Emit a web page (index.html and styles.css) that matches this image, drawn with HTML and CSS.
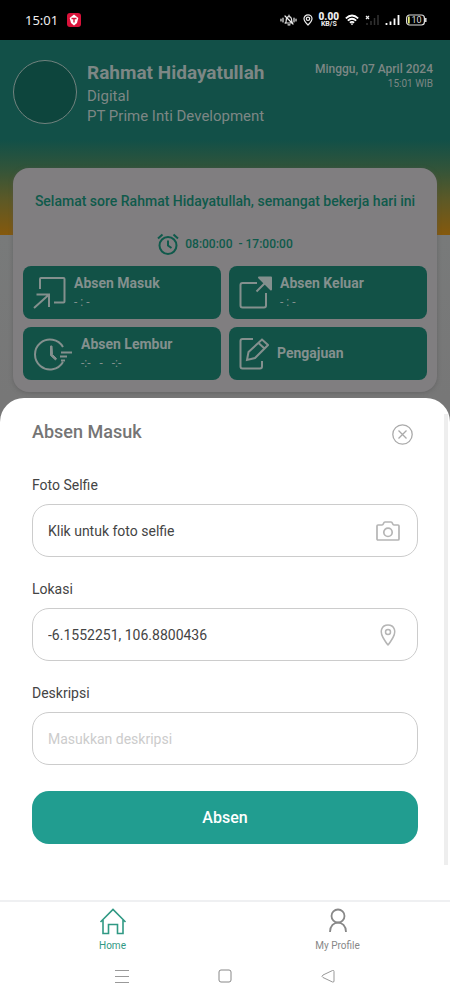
FILE: index.html
```html
<!DOCTYPE html>
<html lang="id">
<head>
<meta charset="utf-8">
<meta name="viewport" content="width=device-width, initial-scale=1">
<title>Absen Masuk</title>
<link rel="stylesheet" href="styles.css">
</head>
<body>
<div class="app">
  <div class="status">
    <span class="status-time">15:01</span>
    <svg class="status-app" width="14" height="14" viewBox="0 0 14 14"><rect width="14" height="14" rx="3" fill="#d9123a"/><path d="M7 1.500 11.300 5 10 10 7 12.500 4 10 2.700 5Z" fill="#fff"/><path d="M4.500 5.500h5M7 5.500v4" stroke="#d9123a" stroke-width="1.400" fill="none"/></svg>
    <div class="status-icons">
      <svg width="17" height="12" viewBox="0 0 17 12" fill="none" stroke="#eee" stroke-width="1.200" stroke-linecap="round"><path d="M1 5v2M3 4v4M16 5v2M14 4v4M5 9h7M5.500 9C6.500 8 6 6 6.500 4.500 7.500 2 11 2 11.500 5c.2 2 .2 3 1 4M5 2l8 8M8 10.800h2M9 2V1"/></svg>
      <svg width="10" height="12" viewBox="0 0 10 12" fill="none" stroke="#eee" stroke-width="1.200"><path d="M5 11C3 9 1 7 1 4.800a4 4 0 0 1 8 0C9 7 7 9 5 11Z"/><circle cx="5" cy="4.800" r="1.700"/></svg>
      <span class="speed"><b>0.00</b><span>KB/S</span></span>
      <svg width="14" height="12" viewBox="0 0 14 12" fill="none" stroke="#fff" stroke-width="1.700"><path d="M.8 4.300Q7-1.300 13.200 4.300M2.800 6.600Q7 2.900 11.200 6.600M4.800 8.700Q7 6.900 9.200 8.700"/><path d="M5.500 9.500h3L7 11.300Z" fill="#fff" stroke="none"/></svg>
      <svg width="14" height="12" viewBox="0 0 14 12" fill="none"><path d="m1 2 3 3M4 2 1 5" stroke="#eee" stroke-width="1.200"/><path d="M2 11V9M6 11V7M9.500 11V4M13 11V1" stroke="#333" stroke-width="1.500"/></svg>
      <svg width="15" height="12" viewBox="0 0 15 12" stroke="#fff" stroke-width="1.800"><path d="M1.500 11V9M5.500 11V7.500M9.500 11V4.500M13.500 11V1"/></svg>
      <svg class="battery" width="21" height="12" viewBox="0 0 21 12"><rect x=".6" y="1" width="17.800" height="10" rx="3" fill="none" stroke="#ddd" stroke-width="1.200"/><path d="M2 2.500h1.700v7H2Z" fill="#e8ee7a"/><path d="M19.800 4v4" stroke="#ddd" stroke-width="1.500"/><text x="10.500" y="9.300" text-anchor="middle">10</text></svg>
    </div>
  </div>

  <main class="home">
    <header class="profile">
      <div class="avatar"></div>
      <div class="who">
        <h1>Rahmat Hidayatullah</h1>
        <p>Digital</p>
        <p>PT Prime Inti Development</p>
      </div>
      <div class="when"><strong>Minggu, 07 April 2024</strong><span>15:01 WIB</span></div>
    </header>
    <section class="card">
      <p class="greeting">Selamat sore Rahmat Hidayatullah, semangat bekerja hari ini</p>
      <div class="hours">
        <svg width="22" height="22" viewBox="0 0 22 22" fill="none" stroke="currentColor" stroke-width="2"><circle cx="11" cy="12.500" r="8.500"/><path d="M11 7.500v5l3.500 2.500M1 5.500 5.500 1.500M21 5.500 16.500 1.500"/></svg>
        <span>08:00:00 &nbsp;- 17:00:00</span>
      </div>
      <div class="actions">
        <button type="button" class="action">
          <svg width="33" height="33" viewBox="0 0 33 33" fill="none" stroke="currentColor" stroke-width="2"><path d="M7 13V3q0-1 1-1H30.500q1 0 1 1V25.500q0 1-1 1H21M1 32 15.500 19M3.500 18.500H16V31"/></svg>
          <span class="action-text"><b>Absen Masuk</b><small>- : -</small></span>
        </button>
        <button type="button" class="action">
          <svg width="33" height="33" viewBox="0 0 33 33" fill="none" stroke="currentColor" stroke-width="2"><path d="M18 7H3.500Q1.500 7 1.500 9v20.500q0 2 2 2H25q2 0 2-2V17M17.500 15.500 26 7"/><path d="M20 1.500h12v12Z" fill="currentColor" stroke-linejoin="round"/></svg>
          <span class="action-text"><b>Absen Keluar</b><small>- : -</small></span>
        </button>
        <button type="button" class="action">
          <svg width="40" height="34" viewBox="0 0 40 34" fill="none" stroke="currentColor" stroke-width="2"><path d="M30 10A15 15 0 1 0 30 25M28 15.500h11M27 19.500h7M28 23.500h4"/><path d="M17.500 9v9.500l5 4.500 1-1.500-4-4-.5-8.500Z" fill="currentColor" stroke-width="1"/></svg>
          <span class="action-text"><b>Absen Lembur</b><small>-:- &nbsp; - &nbsp; -:-</small></span>
        </button>
        <button type="button" class="action">
          <svg width="30" height="33" viewBox="0 0 30 33" fill="none" stroke="currentColor" stroke-width="2"><path d="M14 2H3.500Q1.500 2 1.500 4v25.500q0 2 2 2H21q2 0 2-2V24M8 23l1.500-8L23 2.500 29 8 16 21ZM19.500 6l6 5.500"/></svg>
          <span class="action-text"><b>Pengajuan</b></span>
        </button>
      </div>
    </section>
  </main>

  <form class="sheet">
    <div class="sheet-head">
      <h2>Absen Masuk</h2>
      <button type="button" class="close" aria-label="Tutup"><svg width="21" height="21" viewBox="0 0 21 21" fill="none" stroke="currentColor" stroke-width="1.300"><circle cx="10.500" cy="10.500" r="9.700"/><path d="m6.500 6.500 8 8M14.500 6.500l-8 8"/></svg></button>
    </div>
    <label for="photo">Foto Selfie</label>
    <div class="field">
      <input id="photo" type="text" value="Klik untuk foto selfie" readonly>
      <svg width="24" height="20" viewBox="0 0 24 20" fill="none" stroke="currentColor" stroke-width="1.700" stroke-linejoin="round"><path d="M1 18V5q0-1 1-1H6q1 0 1.500-1.500Q8 1 9 1h6q1 0 1.500 1.500Q17 4 18 4h4q1 0 1 1V18q0 1-1 1H2q-1 0-1-1Z"/><circle cx="12" cy="11.300" r="4.200"/></svg>
    </div>
    <label for="location">Lokasi</label>
    <div class="field">
      <input id="location" type="text" value="-6.1552251, 106.8800436">
      <svg width="24" height="22" viewBox="0 0 24 22" fill="none" stroke="currentColor" stroke-width="1.500" stroke-linejoin="round"><path d="M12 21Q10.500 19.500 7 13.500C3.500 7.500 5.500 1 12 1s8.500 6.500 5 12.500Q13.500 19.500 12 21Z"/><circle cx="12" cy="8" r="2.500"/></svg>
    </div>
    <label for="description">Deskripsi</label>
    <div class="field"><input id="description" type="text" placeholder="Masukkan deskripsi"></div>
    <button type="button" class="submit">Absen</button>
  </form>

  <nav class="tabs">
    <a href="#home" class="tab active"><svg width="28" height="28" viewBox="0 0 28 28" fill="none" stroke="currentColor" stroke-width="1.600"><path d="M1.500 15 14 2.500 26.500 15M4 12.500V26.500h5.500V17.500h9v9H24V12.500"/></svg>Home</a>
    <a href="#profile" class="tab"><svg width="28" height="28" viewBox="0 0 28 28" fill="none" stroke="currentColor" stroke-width="1.800"><circle cx="14" cy="9" r="6.500"/><path d="M6 25c0-12.500 16-12.500 16 0"/></svg>My Profile</a>
  </nav>
  <div class="system">
    <button type="button" aria-label="Menu"><svg width="14" height="14" viewBox="0 0 14 14" stroke="#999" fill="none"><path d="M0 1.500h14M0 7.500h14M0 13.500h14"/></svg></button>
    <button type="button" aria-label="Beranda"><svg width="14" height="14" viewBox="0 0 14 14" stroke="#888" fill="none"><rect x="1" y="1" width="12" height="12" rx="2"/></svg></button>
    <button type="button" aria-label="Kembali"><svg width="14" height="14" viewBox="0 0 14 14" stroke="#999" fill="none" stroke-linejoin="round"><path d="M2 6Q0 7.500 2 8.500L11.500 13q1.500.5 1.500-1V2.500q0-1.500-1.500-1Z"/></svg></button>
  </div>
</div>
</body>
</html>
```
FILE: styles.css
```css
* { box-sizing: border-box; }
body, h1, h2, p { margin: 0; }
body { font-family: Roboto, "Liberation Sans", sans-serif; background: #fff; }
button { border: 0; padding: 0; background: none; font: inherit; color: inherit; }
svg { flex: none; display: block; }

.app { display: flex; flex-direction: column; min-height: 100vh; background: #777; }

.status { display: flex; align-items: center; height: 40px; padding: 0 23px 0 25px; background: #000; color: #eee; }
.status-time { font: 13px "Noto Sans", sans-serif; }
.status-app { margin-left: 9px; }
.status-icons { display: flex; align-items: center; gap: 6px; margin-left: auto; }
.speed { display: grid; justify-items: center; font-size: 7px; line-height: 7px; font-weight: 700; }
.speed b { font-size: 10px; line-height: 9px; }
.battery { font-size: 9px; fill: #ddd; }

.home { padding: 16px 13px 6px; background: linear-gradient(#125048 0, #125048 100px, #31543a 128px, #5d5926 160px, #85590d 195px, #787a7a 195px, #777 100%); }
.profile { display: flex; height: 112px; color: #7d8785; }
.avatar { width: 64px; height: 64px; margin-top: 4px; border: 1px solid #71827e; border-radius: 50%; background: #0d453d; }
.who { flex: 1; padding: 6px 0 0 10px; white-space: nowrap; font-size: 15px; line-height: 20px; }
.who h1 { font-size: 19px; line-height: 22px; padding-bottom: 2px; }
.when { display: flex; flex-direction: column; align-items: flex-end; padding: 5px 4px 0 0; font-size: 10px; line-height: 14px; white-space: nowrap; }
.when strong { font-size: 12px; line-height: 16px; font-weight: 500; }

.card { padding: 22px 10px 12px; border-radius: 16px; background: #807e80; color: #0f5a4b; box-shadow: 0 1px 4px #5558; }
.greeting { text-align: center; font-size: 14px; line-height: 22px; font-weight: 500; }
.hours { display: flex; justify-content: center; align-items: center; gap: 6px; height: 22px; margin: 21px 0 11px; font-size: 12px; font-weight: 500; }
.actions { display: grid; grid-template-columns: 1fr 1fr; gap: 8px; }
.action { display: flex; align-items: center; gap: 8px; height: 53px; padding: 0 10px; border-radius: 8px; background: #125247; color: #84908e; text-align: left; }
.action-text { display: grid; line-height: 19px; }
.action-text b { font-size: 14px; font-weight: 700; }
.action-text small { font-size: 12px; }

.sheet { position: relative; display: flex; flex-direction: column; flex: 1; padding: 22px 32px 56px; border-radius: 24px 24px 0 0; background: #fff; color: #444; }
.sheet::after { content: ""; position: absolute; top: 16px; right: 2px; bottom: 35px; width: 4px; background: #eee; }
.sheet-head { display: flex; justify-content: space-between; height: 54px; padding-right: 5px; }
.sheet h2 { font-size: 18px; line-height: 24px; font-weight: 500; color: #757575; }
.close { align-self: flex-start; margin-top: 4px; color: #aaa; }
.sheet label { font-size: 14px; line-height: 22px; margin-bottom: 8px; }
.field { display: flex; align-items: center; height: 53px; margin-bottom: 21px; padding: 0 17px 0 15px; border: 1px solid #ccc; border-radius: 17px; color: #b5b5b5; }
.field input { flex: 1; min-width: 0; height: 100%; padding: 0; border: 0; outline: 0; background: none; font: inherit; font-size: 14px; color: #444; }
.field input::placeholder { color: #ccc; opacity: 1; }
.submit { height: 53px; margin-top: 5px; border-radius: 17px; background: #219d90; color: #fff; font-size: 16px; font-weight: 500; }

.tabs { display: grid; grid-template-columns: 1fr 1fr; height: 58px; border-top: 2px solid #eff0f2; background: #fff; }
.tab { display: flex; flex-direction: column; align-items: center; gap: 4px; padding-top: 5px; color: #888; font-size: 10px; line-height: 14px; text-decoration: none; }
.tab.active { color: #309984; }
.system { display: flex; justify-content: center; align-items: center; gap: 89px; height: 42px; padding-bottom: 6px; background: #fff; }
```
